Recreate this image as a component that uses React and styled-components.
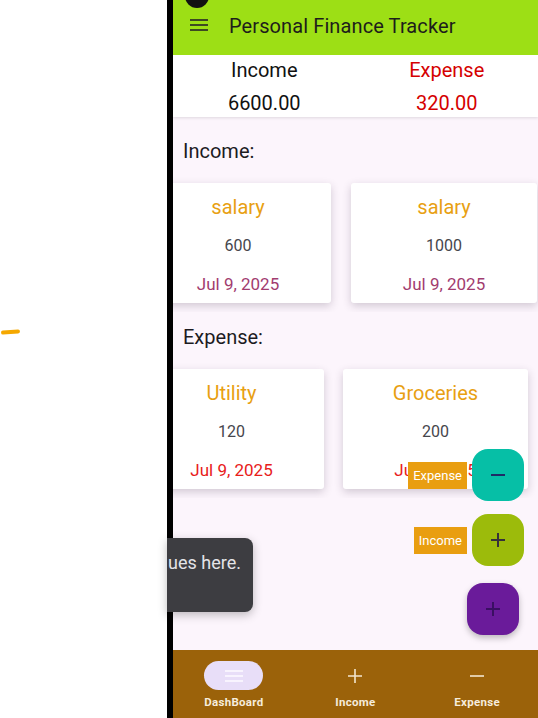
import React from 'react'
import styled, { createGlobalStyle } from 'styled-components'

const GlobalStyle = createGlobalStyle`
  html, body {
    margin: 0;
    padding: 0;
    background: #fff;
    font-family: Roboto, "Noto Sans", sans-serif;
  }
`

const Screen = styled.div`
  position: relative;
  width: 538px;
  height: 718px;
  display: flex;
  overflow: hidden;
`

const LeftPane = styled.div`
  width: 167px;
  flex-shrink: 0;
  background: #fff;
  padding-top: 330px;
  box-sizing: border-box;
`

const Stroke = styled.div`
  width: 19px;
  height: 4px;
  margin-left: 1px;
  border-radius: 2px;
  background: #f5a800;
  transform: rotate(-4deg);
`

const Bezel = styled.div`
  width: 6px;
  flex-shrink: 0;
  background: #000;
`

const Phone = styled.div`
  position: relative;
  flex: 1;
  display: flex;
  flex-direction: column;
  background: #fcf5fc;
  overflow: hidden;
`

const AppBar = styled.div`
  position: relative;
  height: 55px;
  flex-shrink: 0;
  background: #9ddf15;
  display: flex;
  align-items: center;
  padding: 0 0 0 17px;
  gap: 21px;
  z-index: 2;
`

const Camera = styled.div`
  position: absolute;
  left: 12px;
  top: -16px;
  width: 24px;
  height: 24px;
  border-radius: 50%;
  background: #111;
`

const Burger = styled.div`
  display: flex;
  flex-direction: column;
  gap: 3px;
  width: 18px;
  margin-top: -5px;
  span {
    display: block;
    height: 2px;
    background: ${p => p.$color};
  }
`

const Title = styled.h1`
  margin: 0;
  margin-top: -4px;
  font-size: 20px;
  font-weight: 400;
  color: #1d1d1b;
  letter-spacing: 0.1px;
`

const Summary = styled.div`
  height: 62px;
  flex-shrink: 0;
  background: #fff;
  display: grid;
  grid-template-columns: 1fr 1fr;
  box-shadow: 0 1px 3px rgba(0, 0, 0, 0.12);
  z-index: 1;
`

const SummaryCol = styled.div`
  display: flex;
  flex-direction: column;
  align-items: center;
  margin-top: -1px;
  color: ${p => p.$color};
  font-size: 20px;
  line-height: 33px;
`

const SectionLabel = styled.div`
  padding: ${p => p.$top}px 10px 10px;
  font-size: 20px;
  line-height: 24px;
  color: #1c1b1f;
`

const CardRow = styled.div`
  height: 139px;
  flex-shrink: 0;
  overflow: hidden;
  display: flex;
  align-items: center;
`

const Track = styled.div`
  display: flex;
  gap: ${p => p.$gap}px;
  margin-left: ${p => p.$offset}px;
`

const Card = styled.div`
  width: ${p => p.$width}px;
  height: 120px;
  flex-shrink: 0;
  background: #fff;
  border-radius: 3px;
  box-shadow: 0 3px 8px rgba(60, 40, 70, 0.22);
  display: flex;
  flex-direction: column;
  align-items: center;
  padding-top: 11px;
  box-sizing: border-box;
`

const CardTitle = styled.div`
  font-size: 20px;
  line-height: 26px;
  color: #e8a012;
`

const CardAmount = styled.div`
  margin-top: 14px;
  font-size: 16px;
  line-height: 24px;
  color: #46464c;
`

const CardDate = styled.div`
  margin-top: 13px;
  font-size: 17px;
  line-height: 26px;
  color: ${p => p.$color};
`

const Spacer = styled.div`
  flex: 1;
`

const BottomNav = styled.nav`
  height: 68px;
  flex-shrink: 0;
  background: #9b620a;
  display: grid;
  grid-template-columns: repeat(3, 1fr);
`

const NavItem = styled.div`
  display: flex;
  flex-direction: column;
  align-items: center;
  padding-top: 11px;
  gap: 5px;
`

const NavIcon = styled.div`
  width: 59px;
  height: 29px;
  border-radius: 15px;
  background: ${p => (p.$active ? '#e8def8' : 'transparent')};
  display: flex;
  align-items: center;
  justify-content: center;
`

const NavLabel = styled.div`
  font-size: 11.5px;
  font-weight: 700;
  color: #f6ecdc;
  letter-spacing: 0.3px;
`

const FabStack = styled.div`
  position: absolute;
  right: 14px;
  top: 449px;
  display: flex;
  flex-direction: column;
  align-items: flex-end;
  gap: 13px;
  z-index: 3;
`

const MiniRow = styled.div`
  display: flex;
  align-items: center;
  gap: 5px;
`

const MiniLabel = styled.div`
  background: #e99e10;
  color: #fff;
  font-size: 13px;
  padding: 0 5px;
  height: 27px;
  line-height: 27px;
`

const Fab = styled.div`
  width: 52px;
  height: 52px;
  border-radius: 16px;
  background: ${p => p.$bg};
  display: flex;
  align-items: center;
  justify-content: center;
  box-shadow: ${p => (p.$raised ? '0 3px 6px rgba(0,0,0,0.25)' : 'none')};
`

const MainFab = styled(Fab)`
  margin-top: 4px;
  margin-right: 5px;
`

const Toast = styled.div`
  position: absolute;
  left: 167px;
  top: 538px;
  width: 86px;
  height: 74px;
  background: #3d3d41;
  border-radius: 0 8px 8px 0;
  box-shadow: 0 3px 10px rgba(0, 0, 0, 0.25);
  padding: 13px 12px 0 0;
  box-sizing: border-box;
  text-align: right;
  z-index: 5;
`

const ToastText = styled.div`
  white-space: nowrap;
  font-size: 18px;
  line-height: 24px;
  color: #e4e4e8;
`

const Plus = ({ color, size = 16, w = 1.6 }) => (
  <svg width={size} height={size} viewBox="0 0 16 16">
    <path d="M8 1v14M1 8h14" stroke={color} strokeWidth={w} fill="none" />
  </svg>
)

const Minus = ({ color, size = 16, w = 1.6 }) => (
  <svg width={size} height={size} viewBox="0 0 16 16">
    <path d="M1 8h14" stroke={color} strokeWidth={w} fill="none" />
  </svg>
)

const Lines = ({ color }) => (
  <svg width="18" height="12" viewBox="0 0 18 12">
    <path d="M0 1h18M0 6h18M0 11h18" stroke={color} strokeWidth="1.6" fill="none" />
  </svg>
)

const incomes = [
  { title: 'salary', amount: '600', date: 'Jul 9, 2025' },
  { title: 'salary', amount: '1000', date: 'Jul 9, 2025' },
]

const expenses = [
  { title: 'Utility', amount: '120', date: 'Jul 9, 2025' },
  { title: 'Groceries', amount: '200', date: 'Jul 9, 2025' },
]

export default function App() {
  return (
    <>
      <GlobalStyle />
      <Screen>
        <LeftPane>
          <Stroke />
        </LeftPane>
        <Bezel />
        <Phone>
          <AppBar>
            <Camera />
            <Burger $color="#3d4a22">
              <span />
              <span />
              <span />
            </Burger>
            <Title>Personal Finance Tracker</Title>
          </AppBar>
          <Summary>
            <SummaryCol $color="#111">
              <span>Income</span>
              <span>6600.00</span>
            </SummaryCol>
            <SummaryCol $color="#d50000">
              <span>Expense</span>
              <span>320.00</span>
            </SummaryCol>
          </Summary>

          <SectionLabel $top={22}>Income:</SectionLabel>
          <CardRow>
            <Track $gap={20} $offset={-28}>
              {incomes.map((c, i) => (
                <Card key={i} $width={186}>
                  <CardTitle>{c.title}</CardTitle>
                  <CardAmount>{c.amount}</CardAmount>
                  <CardDate $color="#a23c6f">{c.date}</CardDate>
                </Card>
              ))}
            </Track>
          </CardRow>

          <SectionLabel $top={13}>Expense:</SectionLabel>
          <CardRow>
            <Track $gap={19} $offset={-34}>
              {expenses.map((c, i) => (
                <Card key={i} $width={185}>
                  <CardTitle>{c.title}</CardTitle>
                  <CardAmount>{c.amount}</CardAmount>
                  <CardDate $color="#e8201a">{c.date}</CardDate>
                </Card>
              ))}
            </Track>
          </CardRow>

          <Spacer />

          <BottomNav>
            <NavItem>
              <NavIcon $active>
                <Lines color="#fdfbff" />
              </NavIcon>
              <NavLabel>DashBoard</NavLabel>
            </NavItem>
            <NavItem>
              <NavIcon>
                <Plus color="#f3e6cf" size={16} />
              </NavIcon>
              <NavLabel>Income</NavLabel>
            </NavItem>
            <NavItem>
              <NavIcon>
                <Minus color="#f3e6cf" size={16} />
              </NavIcon>
              <NavLabel>Expense</NavLabel>
            </NavItem>
          </BottomNav>

          <FabStack>
            <MiniRow>
              <MiniLabel>Expense</MiniLabel>
              <Fab $bg="#06bfa6">
                <Minus color="#1f2b66" size={16} w={2} />
              </Fab>
            </MiniRow>
            <MiniRow>
              <MiniLabel>Income</MiniLabel>
              <Fab $bg="#9cbb0b">
                <Plus color="#35303a" size={16} w={2} />
              </Fab>
            </MiniRow>
            <MainFab $bg="#6a1b9a" $raised>
              <Plus color="#3a0f62" size={16} w={2} />
            </MainFab>
          </FabStack>
        </Phone>
        <Toast>
          <ToastText>ues here.</ToastText>
        </Toast>
      </Screen>
    </>
  )
}
